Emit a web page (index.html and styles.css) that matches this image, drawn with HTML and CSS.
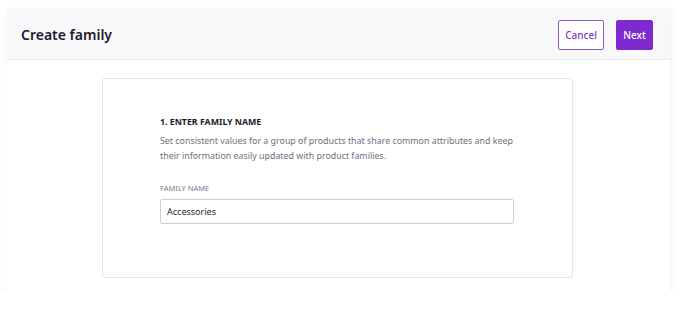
FILE: index.html
```html
<!DOCTYPE html>
<html>
<head>
<meta charset="utf-8">
<link rel="stylesheet" href="styles.css">
</head>
<body>
<div class="panel">
  <header class="header">
    <h1 class="title">Create family</h1>
    <div class="actions">
      <button class="btn btn-outline">Cancel</button>
      <button class="btn btn-primary">Next</button>
    </div>
  </header>
  <main class="content">
    <section class="card">
      <h2 class="step">1. ENTER FAMILY NAME</h2>
      <p class="desc">Set consistent values for a group of products that share common attributes and keep their information easily updated with product families.</p>
      <label class="label">FAMILY NAME</label>
      <div class="input">Accessories</div>
    </section>
  </main>
</div>
</body>
</html>
```

FILE: styles.css
```css
* { box-sizing: border-box; }
html, body { margin: 0; padding: 0; background: #ffffff; }
body {
  font-family: "Noto Sans", "Open Sans", sans-serif;
  padding: 9px 18px 0 7px;
}
.panel {
  width: 663px;
  height: 282px;
  background: #fff;
  box-shadow: 0 6px 12px rgba(0,0,0,0.04), 2px 0 6px rgba(0,0,0,0.03);
  display: flex;
  flex-direction: column;
}
.header {
  height: 51px;
  background: #f8f8fb;
  border-bottom: 1px solid #ececf0;
  display: flex;
  align-items: center;
  justify-content: space-between;
  padding: 0 17px 0 14px;
}
.title {
  margin: 0;
  font-size: 14px;
  font-weight: 600;
  color: #1c1b2e;
}
.actions { display: flex; gap: 12px; margin-top: 1px; }
.btn {
  height: 30px;
  font-family: inherit;
  font-size: 10px;
  font-weight: 500;
  border-radius: 2px;
  padding: 0;
  cursor: pointer;
}
.btn-outline {
  width: 46px;
  background: #fff;
  color: #7a3bc4;
  border: 1px solid #8e5acb;
}
.btn-primary {
  width: 37px;
  background: #7d2bcf;
  color: #fff;
  border: 1px solid #7d2bcf;
}
.content {
  padding: 18px 0 0 95px;
}
.card {
  width: 471px;
  height: 200px;
  border: 1px solid #e6e6ea;
  border-radius: 3px;
  padding: 36px 0 0 57px;
}
.step {
  margin: 0;
  font-size: 8.8px;
  font-weight: 700;
  color: #1c1b2e;
  line-height: 14px;
}
.desc {
  margin: 5px 0 0 0;
  width: 360px;
  font-size: 8.85px;
  line-height: 15px;
  color: #6f6f80;
}
.label {
  display: block;
  margin-top: 19px;
  font-size: 7.5px;
  color: #77778a;
  line-height: 10px;
}
.input {
  margin-top: 6px;
  width: 354px;
  height: 25px;
  border: 1px solid #cfcfd6;
  border-radius: 2px;
  padding: 0 6px;
  display: flex;
  align-items: center;
  font-size: 9px;
  color: #1f1f2a;
}
```
